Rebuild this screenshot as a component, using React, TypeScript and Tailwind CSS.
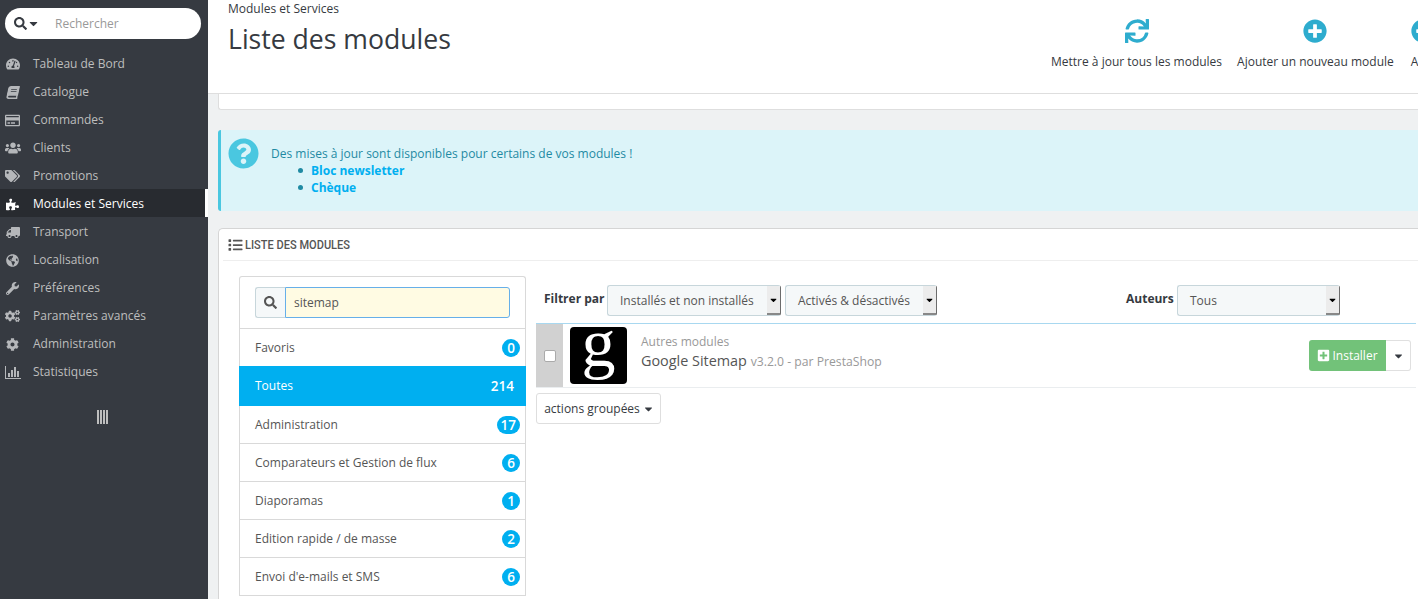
import type { ReactNode } from "react"
import {
  FaBook,
  FaCaretDown,
  FaCog,
  FaCogs,
  FaGlobeAmericas,
  FaList,
  FaPlusCircle,
  FaPlusSquare,
  FaPuzzlePiece,
  FaQuestionCircle,
  FaRegCreditCard,
  FaSearch,
  FaSync,
  FaTachometerAlt,
  FaTags,
  FaTruck,
  FaUsers,
  FaWrench,
} from "react-icons/fa"

function StatsIcon() {
  return (
    <svg viewBox="0 0 16 13" className="h-[13px] w-[16px]" fill="currentColor">
      <path d="M0 0h1v12h15v1H0z" />
      <path d="M3 7h2v4H3zM6 4h2v7H6zM9 1h2v10H9zM12 5h2v6h-2z" />
    </svg>
  )
}

const menu: { label: string; icon: ReactNode; active?: boolean }[] = [
  { label: "Tableau de Bord", icon: <FaTachometerAlt className="h-[14px] w-[14px]" /> },
  { label: "Catalogue", icon: <FaBook className="h-[13px] w-[12px] -skew-x-12" /> },
  { label: "Commandes", icon: <FaRegCreditCard className="h-[15px] w-[15px]" /> },
  { label: "Clients", icon: <FaUsers className="h-[16px] w-[16px]" /> },
  { label: "Promotions", icon: <FaTags className="h-[14px] w-[15px]" /> },
  { label: "Modules et Services", icon: <FaPuzzlePiece className="h-[13px] w-[13px]" />, active: true },
  { label: "Transport", icon: <FaTruck className="h-[13px] w-[14px] -scale-x-100" /> },
  { label: "Localisation", icon: <FaGlobeAmericas className="h-[13px] w-[13px]" /> },
  { label: "Préférences", icon: <FaWrench className="h-[13px] w-[13px]" /> },
  { label: "Paramètres avancés", icon: <FaCogs className="h-[14px] w-[15px]" /> },
  { label: "Administration", icon: <FaCog className="h-[13px] w-[13px]" /> },
  { label: "Statistiques", icon: <StatsIcon /> },
]

const categories: { label: string; count: number; active?: boolean }[] = [
  { label: "Favoris", count: 0 },
  { label: "Toutes", count: 214, active: true },
  { label: "Administration", count: 17 },
  { label: "Comparateurs et Gestion de flux", count: 6 },
  { label: "Diaporamas", count: 1 },
  { label: "Edition rapide / de masse", count: 2 },
  { label: "Envoi d'e-mails et SMS", count: 6 },
]

function Sidebar() {
  return (
    <aside className="h-[599px] w-[208px] shrink-0 bg-[#363a41] pt-2">
      <div className="mx-[5px] flex h-[31px] w-[196px] items-center rounded-full bg-white pl-[9px] text-[#363a41]">
        <FaSearch className="h-[13px] w-[13px]" />
        <FaCaretDown className="ml-[2px] h-[13px] w-[9px]" />
        <span className="ml-[17px] text-xs text-[#999]">Rechercher</span>
      </div>
      <nav className="mt-[10px]">
        {menu.map((item) => (
          <div
            key={item.label}
            className={
              item.active
                ? "flex h-7 items-center border-r-[3px] border-white bg-[#282b30] pt-[2px] text-xs text-white"
                : "flex h-7 items-center pt-[2px] text-xs text-[#bebebe]"
            }
          >
            <span
              className={
                item.active
                  ? "flex w-[33px] shrink-0 justify-center pr-[8px] text-white"
                  : "flex w-[33px] shrink-0 justify-center pr-[8px] text-[#b5b7ba]"
              }
            >
              {item.icon}
            </span>
            {item.label}
          </div>
        ))}
      </nav>
      <div className="mt-[25px] flex justify-center gap-px pr-[3px]">
        <span className="h-[14px] w-[2px] bg-[#bebebe]" />
        <span className="h-[14px] w-[2px] bg-[#bebebe]" />
        <span className="h-[14px] w-[2px] bg-[#bebebe]" />
        <span className="h-[14px] w-[2px] bg-[#bebebe]" />
      </div>
    </aside>
  )
}

function Header() {
  return (
    <header className="flex h-[94px] border-b border-[#dedede] bg-white pl-5">
      <div className="w-[823px] shrink-0">
        <div className="pt-px text-xs leading-[16px] text-[#363a41]">Modules et Services</div>
        <h1 className="mt-[4px] text-[26.6px] leading-[36px] text-[#363a41]">Liste des modules</h1>
      </div>
      <div className="flex shrink-0 gap-[15px] pt-[19px]">
        <ToolbarItem icon={<FaSync className="h-6 w-6" />} label="Mettre à jour tous les modules" />
        <ToolbarItem icon={<FaPlusCircle className="h-6 w-6" />} label="Ajouter un nouveau module" />
        <div className="ml-[2px]">
          <ToolbarItem icon={<FaPlusCircle className="h-6 w-6" />} label="Aide" />
        </div>
      </div>
    </header>
  )
}

function ToolbarItem({ icon, label }: { icon: ReactNode; label: string }) {
  return (
    <div className="flex flex-col items-center">
      <span className="text-[#2eacce]">{icon}</span>
      <span className="mt-[11px] text-xs leading-[16px] whitespace-nowrap text-[#363a41]">{label}</span>
    </div>
  )
}

function Alert() {
  return (
    <div className="mt-[20px] flex h-[81px] rounded-l-[3px] border-l-[3px] border-[#4ac7e0] bg-[#dcf4f9] pt-[8px] pl-[7px] text-[#1f8aa3]">
      <FaQuestionCircle className="h-[31px] w-[31px] text-[#4ac7e0]" />
      <div className="ml-[12px] pt-[7px] text-xs leading-[17px]">
        <p>Des mises à jour sont disponibles pour certains de vos modules !</p>
        <ul className="ml-[27px]">
          <li className="flex items-center">
            <span className="mr-2 h-[5px] w-[5px] rounded-full bg-[#1f8aa3]" />
            <span className="font-bold text-[#00aff0]">Bloc newsletter</span>
          </li>
          <li className="flex items-center">
            <span className="mr-2 h-[5px] w-[5px] rounded-full bg-[#1f8aa3]" />
            <span className="font-bold text-[#00aff0]">Chèque</span>
          </li>
        </ul>
      </div>
    </div>
  )
}

function CategoryList() {
  return (
    <div className="w-[287px] shrink-0 rounded-t-[3px] border-x border-t border-[#d9d9d9]">
      <div className="flex h-[52px] border-b border-[#d9d9d9] px-[15px] pt-[10px]">
        <div className="flex h-[31px] w-[30px] items-center justify-center rounded-l-[3px] border border-r-0 border-[#c7d6db] bg-[#f5f8f9] text-[#555]">
          <FaSearch className="h-[13px] w-[13px]" />
        </div>
        <div className="flex h-[31px] flex-1 items-center rounded-r-[3px] border border-[#66afe9] bg-[#fffbe3] pl-[8px] text-xs text-[#555]">
          sitemap
        </div>
      </div>
      {categories.map((cat, i) => (
        <div
          key={cat.label}
          className={
            cat.active
              ? "-mx-px flex h-10 items-center justify-between bg-[#00aff0] pr-[12px] pl-[16px] text-xs text-white"
              : i === 0
                ? "flex h-[37px] items-center justify-between pr-[5px] pl-[15px] text-xs text-[#555]"
                : "flex h-[38px] items-center justify-between border-b border-[#d9d9d9] pr-[5px] pl-[15px] text-xs text-[#555]"
          }
        >
          <span className={cat.active ? "-mt-px" : ""}>{cat.label}</span>
          <span
            className={
              cat.active
                ? "text-[13.5px] font-semibold"
                : "flex h-[18px] min-w-[18px] items-center justify-center rounded-full bg-[#00aff0] px-[4px] text-[13.5px] font-semibold text-white"
            }
          >
            {cat.count}
          </span>
        </div>
      ))}
    </div>
  )
}

function FakeSelect({ label, width }: { label: string; width: string }) {
  return (
    <div
      className={`flex h-[31px] items-center justify-between rounded-[3px] border border-[#c7d6db] border-r-[#6c6c6c] bg-[#f5f8f9] pl-3 text-xs text-[#555] ${width}`}
    >
      {label}
      <span className="flex h-full w-[13px] items-center justify-center border-b-2 border-[#888] bg-[#ececec] text-black">
        <FaCaretDown className="h-[10px] w-[7px]" />
      </span>
    </div>
  )
}

function ModuleTable() {
  return (
    <div className="ml-[10px] w-[880px] shrink-0">
      <div className="flex h-[47px] items-start pt-[9px]">
        <span className="mt-[6px] ml-[8px] w-[63px] text-xs font-bold text-[#363a41]">Filtrer par</span>
        <FakeSelect label="Installés et non installés" width="w-[174px]" />
        <span className="w-[4px]" />
        <FakeSelect label="Activés & désactivés" width="w-[152px]" />
        <span className="mt-[6px] ml-[189px] w-[51px] text-xs font-bold text-[#363a41]">Auteurs</span>
        <FakeSelect label="Tous" width="w-[163px]" />
      </div>
      <div className="flex h-[65px] border-t border-b border-t-[#a8d8f0] border-b-[#eaedef]">
        <div className="flex w-[27px] items-center justify-center bg-[#d1d1d1] pl-px">
          <span className="h-[12px] w-[12px] rounded-[2px] border border-[#aaa] bg-white" />
        </div>
        <div className="mt-[3px] ml-[7px] flex h-[57px] w-[57px] items-center justify-center overflow-hidden rounded-[4px] bg-black pb-[24px] font-['Liberation_Serif',serif] text-[68px] leading-[33px] text-white">
          g
        </div>
        <div className="ml-[14px] pt-[9px]">
          <div className="text-xs leading-[17px] text-[#999]">Autres modules</div>
          <div className="mt-[1px] text-[14.4px] leading-[19px] text-[#555]">
            Google Sitemap <span className="text-[12.2px] text-[#999]">v3.2.0 - par PrestaShop</span>
          </div>
        </div>
        <div className="mt-[16px] mr-[5px] ml-auto flex h-[31px]">
          <div className="flex w-[77px] items-center justify-center gap-[2px] rounded-l-[3px] bg-[#72c279] text-xs text-white">
            <FaPlusSquare className="h-[13px] w-[13px]" />
            Installer
          </div>
          <div className="flex w-[25px] items-center justify-center rounded-r-[3px] border border-l-0 border-[#e0e0e0] text-[#363a41]">
            <FaCaretDown className="h-[12px] w-[9px]" />
          </div>
        </div>
      </div>
      <div className="mt-[5px] flex h-[31px] w-[125px] items-center justify-center gap-1 rounded-[3px] border border-[#dedede] text-xs text-[#363a41]">
        actions groupées
        <FaCaretDown className="h-[12px] w-[9px]" />
      </div>
    </div>
  )
}

export default function App() {
  return (
    <div className="flex h-[599px] w-[1418px] overflow-hidden bg-[#eff1f2] font-['Open_Sans',sans-serif]">
      <Sidebar />
      <main className="min-w-0 flex-1 overflow-hidden">
        <Header />
        <div className="pl-[10px]">
          <div className="h-4 rounded-bl-[3px] border-b border-l border-[#dedede] bg-white" />
          <Alert />
          <section className="mt-[17px] h-[400px] rounded-tl-[5px] border-t border-l border-[#d5d5d5] bg-white pl-[4px]">
            <div className="flex h-[32px] items-center border-b border-[#eeeeee] pt-px pl-[5px] text-[#555]">
              <FaList className="mr-[2px] h-[14px] w-[15px]" />
              <span className="inline-block origin-left scale-x-[0.85] font-['Roboto',sans-serif] text-[13px] font-medium whitespace-nowrap">
                LISTE DES MODULES
              </span>
            </div>
            <div className="flex pt-[15px] pl-[16px]">
              <CategoryList />
              <ModuleTable />
            </div>
          </section>
        </div>
      </main>
    </div>
  )
}
